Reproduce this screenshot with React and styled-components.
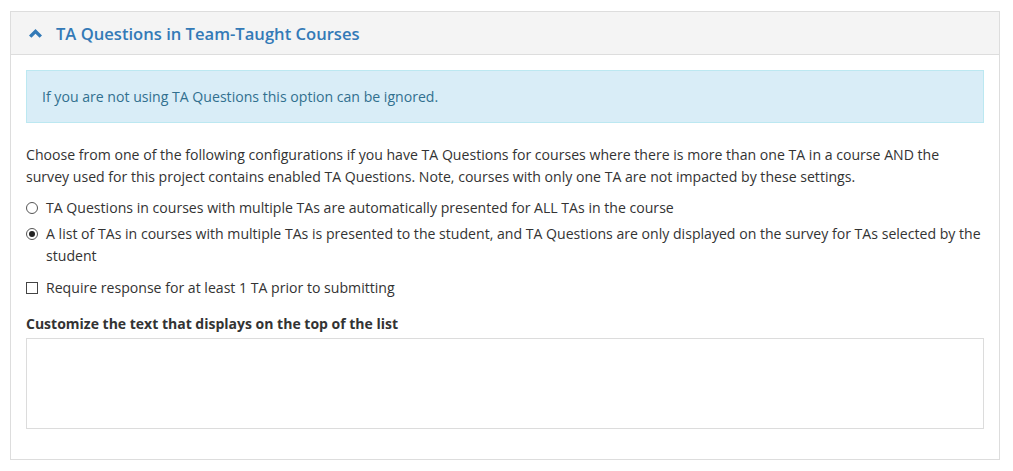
import React, { useState } from "react";
import styled, { createGlobalStyle } from "styled-components";

const GlobalStyle = createGlobalStyle`
  body {
    margin: 0;
    background: #fff;
    font-family: "Open Sans", "Noto Sans", sans-serif;
    color: #333;
  }
`;

const Page = styled.div`
  padding: 11px 13px 0 10px;
`;

const Panel = styled.section`
  border: 1px solid #dddddd;
  background: #fff;
`;

const PanelHeader = styled.div`
  display: flex;
  align-items: center;
  gap: 14px;
  height: 42px;
  padding: 0 18px;
  background: #f4f4f4;
  border-bottom: 1px solid #dddddd;
`;

const Title = styled.h3`
  margin: 0;
  font-size: 16.6px;
  font-weight: 600;
  color: #337ab7;
`;

const PanelBody = styled.div`
  padding: 15px 15px 30px;
`;

const Alert = styled.div`
  display: flex;
  align-items: center;
  height: 51px;
  padding: 0 15px;
  background: #d9edf7;
  border: 1px solid #bce8f1;
  color: #31708f;
  font-size: 14.1px;
  margin-bottom: 21px;
`;

const Text = styled.p`
  margin: 0 0 9px;
  font-size: 14.1px;
  line-height: 22px;
`;

const Option = styled.label`
  display: flex;
  align-items: flex-start;
  gap: 8px;
  font-size: 14.1px;
  line-height: 22px;
  margin-bottom: ${(p) => p.$gap || 4}px;
  cursor: pointer;
`;

const Radio = styled.span`
  flex: none;
  box-sizing: border-box;
  width: 12px;
  height: 12px;
  margin-top: 5px;
  border-radius: 50%;
  border: 1px solid #555;
  display: flex;
  align-items: center;
  justify-content: center;
  background: #fff;
  &::after {
    content: "";
    width: 6px;
    height: 6px;
    border-radius: 50%;
    background: ${(p) => (p.$checked ? "#222" : "transparent")};
  }
`;

const Check = styled.span`
  flex: none;
  box-sizing: border-box;
  width: 12px;
  height: 12px;
  margin-top: 5px;
  border: 1px solid #444;
  background: #fff;
`;

const FieldLabel = styled.div`
  font-size: 14px;
  font-weight: 700;
  line-height: 22px;
  color: #333;
  margin-top: 14px;
  margin-bottom: 3px;
`;

const TextArea = styled.textarea`
  display: block;
  box-sizing: border-box;
  width: 100%;
  height: 91px;
  border: 1px solid #dcdcdc;
  resize: none;
  font-family: inherit;
  outline: none;
`;

const ChevronUp = () => (
  <svg width="13" height="9" viewBox="0 0 13 9" style={{ flex: "none" }}>
    <path d="M0 6.4 L6.5 0 L13 6.4 L10.6 8.8 L6.5 4.8 L2.4 8.8 Z" fill="#337ab7" />
  </svg>
);

export default function App() {
  const [choice, setChoice] = useState(1);
  const [required, setRequired] = useState(false);

  return (
    <Page>
      <GlobalStyle />
      <Panel>
        <PanelHeader>
          <ChevronUp />
          <Title>TA Questions in Team-Taught Courses</Title>
        </PanelHeader>
        <PanelBody>
          <Alert>If you are not using TA Questions this option can be ignored.</Alert>
          <Text>
            Choose from one of the following configurations if you have TA Questions for courses where
            there is more than one TA in a course AND the survey used for this project contains enabled
            TA Questions. Note, courses with only one TA are not impacted by these settings.
          </Text>
          <Option onClick={() => setChoice(0)}>
            <Radio $checked={choice === 0} />
            <span>TA Questions in courses with multiple TAs are automatically presented for ALL TAs in the course</span>
          </Option>
          <Option onClick={() => setChoice(1)} $gap={10}>
            <Radio $checked={choice === 1} />
            <span>
              A list of TAs in courses with multiple TAs is presented to the student, and TA Questions are
              only displayed on the survey for TAs selected by the student
            </span>
          </Option>
          <Option onClick={() => setRequired(!required)}>
            <Check />
            <span>Require response for at least 1 TA prior to submitting</span>
          </Option>
          <FieldLabel>Customize the text that displays on the top of the list</FieldLabel>
          <TextArea />
        </PanelBody>
      </Panel>
    </Page>
  );
}
